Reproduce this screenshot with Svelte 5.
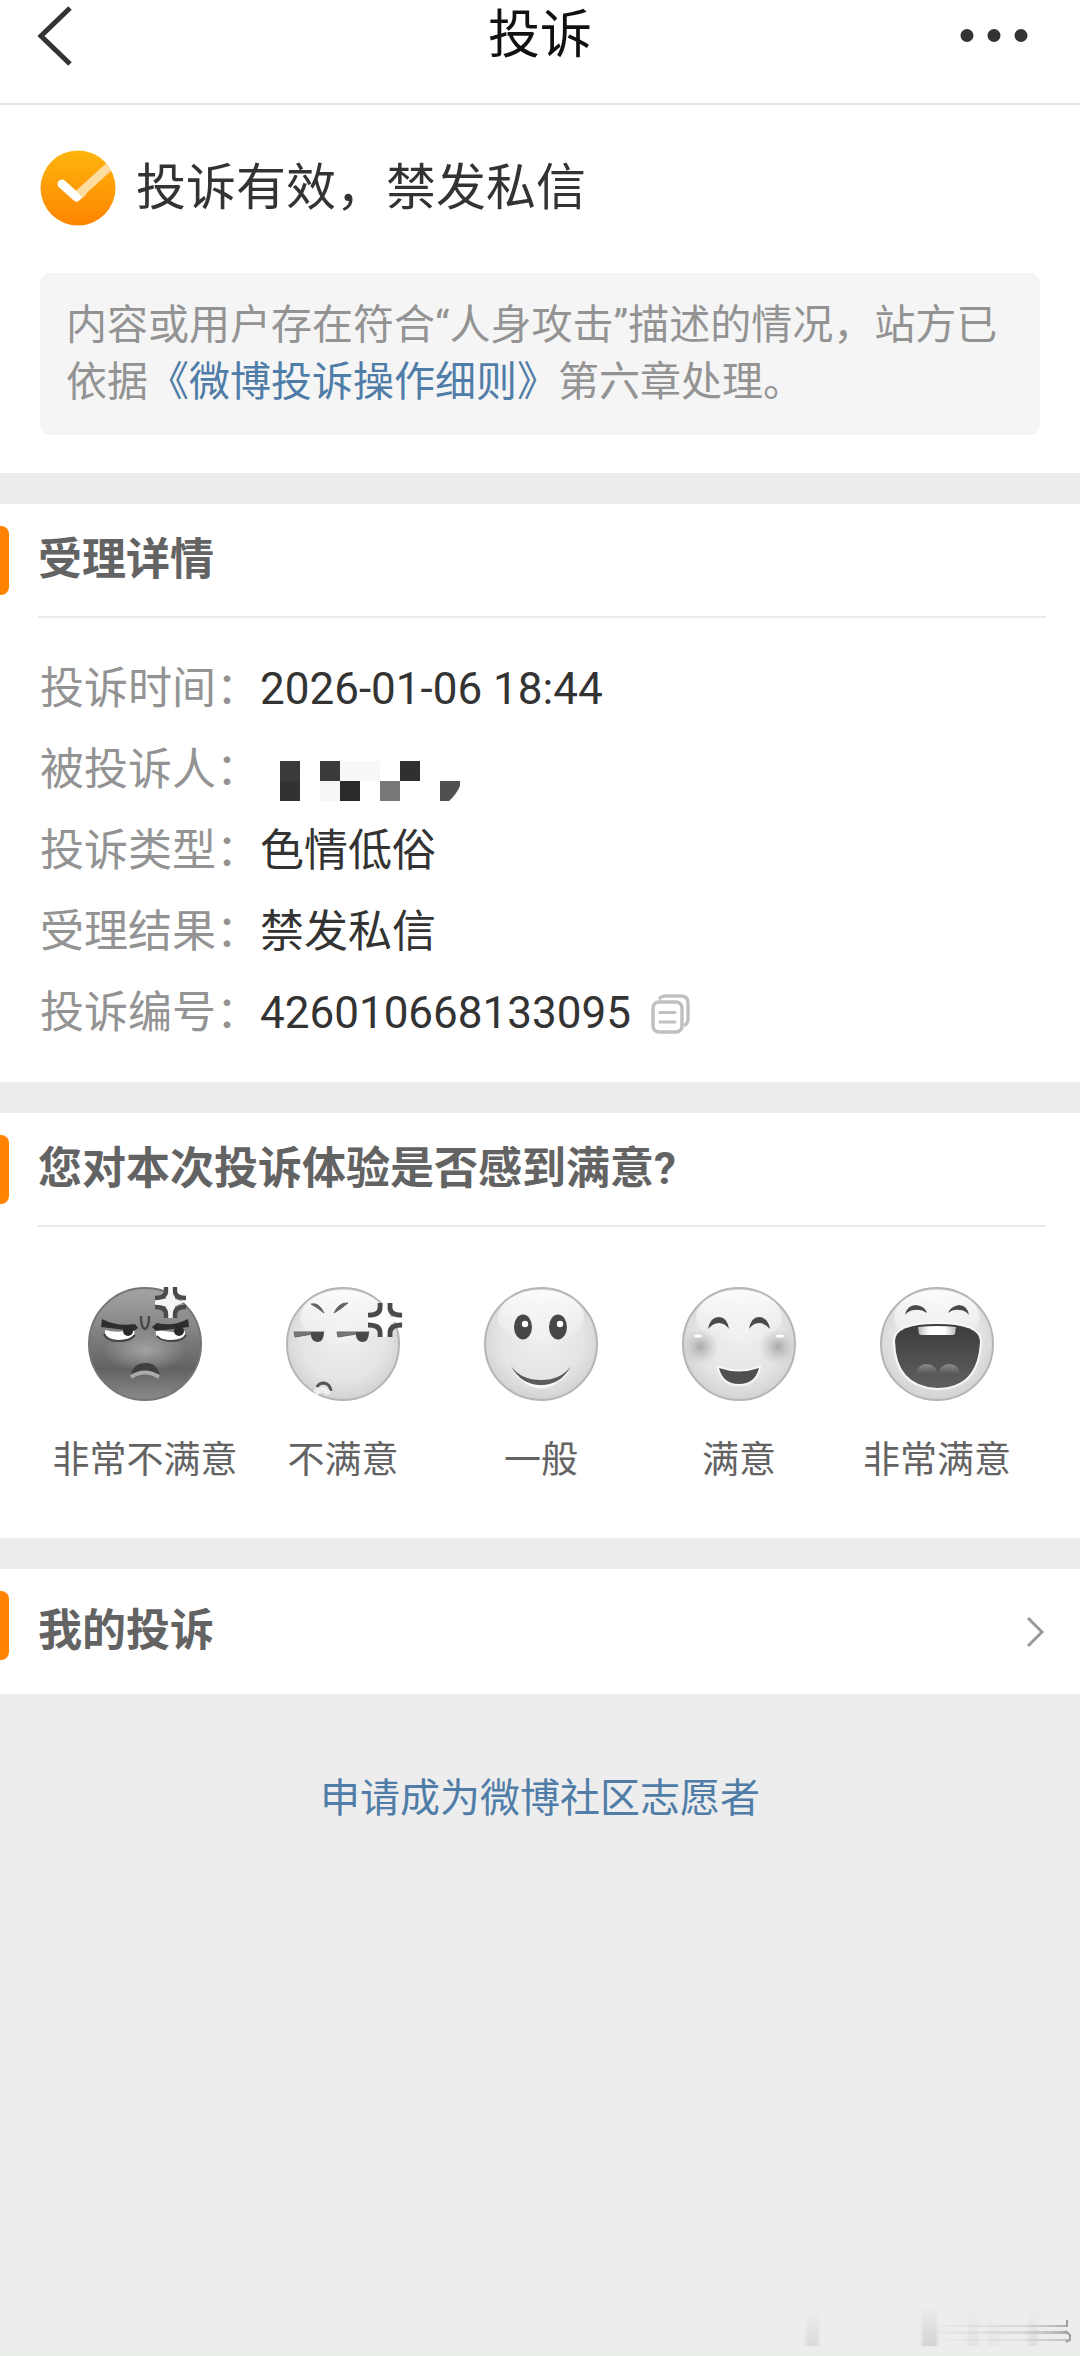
<script>
  const details = [
    { label: "投诉时间：", value: "2026-01-06 18:44" },
    { label: "被投诉人：", masked: true },
    { label: "投诉类型：", value: "色情低俗" },
    { label: "受理结果：", value: "禁发私信" },
    { label: "投诉编号：", value: "426010668133095", copy: true }
  ];

  const ratings = [
    { face: "furious", text: "非常不满意" },
    { face: "annoyed", text: "不满意" },
    { face: "neutral", text: "一般" },
    { face: "happy", text: "满意" },
    { face: "laughing", text: "非常满意" }
  ];

  let selected = $state("");

  function copyNumber(value) {
    navigator.clipboard?.writeText(value);
  }
</script>

<svelte:head>
  <title>投诉</title>
</svelte:head>

{#snippet anger(x, y, s)}
  <g transform="translate({x} {y}) scale({s})">
    <path d="M0 12H11V0H20V12L30 15L20 19V31H11V19H0Z" fill="#fff" opacity="0.9" />
    <g fill="none" stroke="#4a4a4a" stroke-width="4.4">
      <path d="M11 0V4Q11 11 0 11" />
      <path d="M20 0V4Q20 11 31 11" />
      <path d="M11 31V27Q11 20 0 20" />
      <path d="M20 31V27Q20 20 31 20" />
    </g>
  </g>
{/snippet}

<div class="page">
  <header class="navbar">
    <button class="icon-btn" aria-label="返回">
      <svg width="36" height="60" viewBox="0 0 36 60">
        <path d="M34 2L5 30L34 58" fill="none" stroke="#333" stroke-width="5" />
      </svg>
    </button>
    <h1>投诉</h1>
    <button class="icon-btn more" aria-label="更多">
      <svg width="68" height="14" viewBox="0 0 68 14">
        <circle cx="7" cy="6.5" r="6.5" fill="#333" />
        <circle cx="34" cy="6.5" r="6.5" fill="#333" />
        <circle cx="61" cy="6.5" r="6.5" fill="#333" />
      </svg>
    </button>
  </header>

  <section class="status">
    <div class="result">
      <svg width="76" height="76" viewBox="0 0 76 76" aria-hidden="true">
        <defs>
          <linearGradient id="badge" x1="0" y1="0" x2="0" y2="1">
            <stop offset="0" stop-color="#fdb50d" />
            <stop offset="1" stop-color="#fe8400" />
          </linearGradient>
          <clipPath id="badgeClip"><circle cx="38" cy="38" r="37.5" /></clipPath>
        </defs>
        <circle cx="38" cy="38" r="37.5" fill="url(#badge)" />
        <g clip-path="url(#badgeClip)" fill="none" stroke-width="9">
          <path d="M22 34L36.500 47L42 42" stroke="#fff" stroke-linejoin="round" stroke-linecap="round" />
          <path d="M39 44L72 14" stroke="#fedca0" />
        </g>
      </svg>
      <h2>投诉有效，禁发私信</h2>
    </div>
    <p class="notice">内容或用户存在符合“人身攻击”描述的情况，站方已依据<a href="#rules">《微博投诉操作细则》</a>第六章处理。</p>
  </section>

  <section class="card">
    <h3 class="head">受理详情</h3>
    <dl class="details">
      {#each details as item}
        <div class="row">
          <dt>{item.label}</dt>
          <dd>
            {#if item.masked}
              <svg width="200" height="60" viewBox="0 0 200 60" aria-hidden="true">
                <rect x="20" y="20" width="20" height="20" fill="#3a3a3a" />
                <rect x="20" y="40" width="20" height="20" fill="#323232" />
                <rect x="60" y="20" width="20" height="20" fill="#3a3a3a" />
                <rect x="80" y="20" width="40" height="20" fill="#f8f8f8" />
                <rect x="60" y="40" width="20" height="20" fill="#f6f6f6" />
                <rect x="80" y="40" width="20" height="20" fill="#2a2a2a" />
                <rect x="120" y="40" width="20" height="20" fill="#787878" />
                <rect x="140" y="20" width="20" height="20" fill="#303030" />
                <path d="M180 40H200V45Q196 54 189 60H180Z" fill="#505050" />
              </svg>
            {:else}
              {item.value}
            {/if}
            {#if item.copy}
              <button class="icon-btn" aria-label="复制" onclick={() => copyNumber(item.value)}>
                <svg width="40" height="40" viewBox="0 0 40 40">
                  <g fill="none" stroke="#c0c0c0" stroke-width="3.4" stroke-linecap="round">
                    <rect x="2" y="8" width="29" height="30" rx="6" />
                    <path d="M9 4Q11 2 14 2H30Q37 2 37 9V25Q37 29 34 31" />
                    <path d="M9 18.500H24M9 28H24" stroke-width="3" />
                  </g>
                </svg>
              </button>
            {/if}
          </dd>
        </div>
      {/each}
    </dl>
  </section>

  <section class="card">
    <h3 class="head">您对本次投诉体验是否感到满意?</h3>
    <svg class="defs" width="0" height="0" aria-hidden="true">
      <defs>
        <radialGradient id="light" cx="0.5" cy="0.45" r="0.55">
          <stop offset="0" stop-color="#f0f0f0" />
          <stop offset="0.7" stop-color="#e4e4e4" />
          <stop offset="1" stop-color="#d2d2d2" />
        </radialGradient>
        <linearGradient id="shine" x1="0" y1="0" x2="0" y2="1">
          <stop offset="0" stop-color="#fff" stop-opacity="0.9" />
          <stop offset="1" stop-color="#fff" stop-opacity="0" />
        </linearGradient>
        <linearGradient id="dark" x1="0" y1="0" x2="0" y2="1">
          <stop offset="0" stop-color="#a4a4a4" />
          <stop offset="0.35" stop-color="#868686" />
          <stop offset="0.72" stop-color="#626262" />
          <stop offset="1" stop-color="#8a8a8a" />
        </linearGradient>
        <radialGradient id="glow">
          <stop offset="0" stop-color="#a2a2a2" />
          <stop offset="1" stop-color="#a2a2a2" stop-opacity="0" />
        </radialGradient>
        <radialGradient id="blush">
          <stop offset="0" stop-color="#a8a8a8" />
          <stop offset="1" stop-color="#c8c8c8" stop-opacity="0" />
        </radialGradient>
        <linearGradient id="mouth" x1="0" y1="0" x2="0" y2="1">
          <stop offset="0" stop-color="#3c3c3c" />
          <stop offset="1" stop-color="#606060" />
        </linearGradient>
        <linearGradient id="tongue" x1="0" y1="0" x2="0" y2="1">
          <stop offset="0" stop-color="#8c8c8c" />
          <stop offset="1" stop-color="#8c8c8c" stop-opacity="0" />
        </linearGradient>
        <linearGradient id="teeth">
          <stop offset="0" stop-color="#b8b8b8" />
          <stop offset="0.3" stop-color="#fff" />
          <stop offset="0.7" stop-color="#fff" />
          <stop offset="1" stop-color="#b8b8b8" />
        </linearGradient>
      </defs>
    </svg>
    <div class="ratings">
      {#each ratings as item}
        <button class="rate" aria-pressed={selected === item.face} onclick={() => (selected = item.face)}>
          <svg class="face" width="120" height="116" viewBox="-60 -58 120 116" aria-hidden="true">
            {#if item.face === "furious"}
              <circle r="56" fill="url(#dark)" stroke="#757575" stroke-width="2" />
              <ellipse cy="6" rx="42" ry="22" fill="url(#glow)" />
              <path d="M-40 -14Q-26 -10 -11 -15Q-8 -5 -20 -4L-32 -4Q-41 -5 -40 -14Z" fill="#fff" />
              <path d="M40 -13Q26 -10 11 -15Q9 -5 20 -4L32 -4Q41 -5 40 -13Z" fill="#fff" />
              <path d="M-41 -10Q-38 -3 -26 -3Q-15 -3 -10 -9" fill="none" stroke="#444" stroke-width="2" />
              <path d="M12 -8Q16 -3 26 -3Q38 -3 41 -9" fill="none" stroke="#444" stroke-width="2" />
              <path d="M-43 -25Q-28 -17 -10 -20L-7 -16L-11 -13Q-28 -15 -44 -17Z" fill="#2e2e2e" />
              <path d="M43 -25Q28 -17 12 -21L7 -17L11 -13Q28 -15 44 -17Z" fill="#2e2e2e" />
              <circle cx="-17" cy="-13" r="5" fill="#2a2a2a" />
              <circle cx="34" cy="-13" r="5" fill="#2a2a2a" />
              <path d="M-4 -28Q-4 -16 0 -15Q4 -16 4 -28" fill="none" stroke="#484848" stroke-width="2.4" />
              <path d="M-14 31Q-12 19 1 19Q12 19 15 31Q1 25 -14 31Z" fill="#404040" />
              <path d="M-14 33Q0 24 14 33" fill="none" stroke="#aaa" stroke-width="4" />
              {@render anger(10, -57, 1)}
            {:else if item.face === "annoyed"}
              <circle r="56" fill="url(#light)" stroke="#b5b5b5" stroke-width="2" />
              <ellipse cy="-27" rx="43" ry="27" fill="url(#shine)" />
              <path d="M-32 -40Q-24 -42 -19 -31Q-25 -36 -32 -40Z" fill="#666" stroke="#666" />
              <path d="M5 -41Q-4 -42 -9 -31Q-2 -35 5 -41Z" fill="#666" stroke="#666" />
              <path d="M-49 -12H-19L-48 -7Z" fill="#777" stroke="#666" />
              <path d="M-6 -12H26L-5 -7Z" fill="#777" stroke="#666" />
              <path d="M-32 -12H-19Q-19 -2 -26 -2Q-33 -3 -32 -12Z" fill="#484848" />
              <path d="M13 -12H26Q26 -2 19 -2Q12 -3 13 -12Z" fill="#484848" />
              <path d="M-26 43Q-24 39 -19 39Q-13 40 -12 47" fill="none" stroke="#555" stroke-width="3" />
              <path d="M-28 49Q-20 42 -14 50" fill="none" stroke="#eee" stroke-width="6" />
              {@render anger(25, -41, 1.1)}
            {:else if item.face === "neutral"}
              <circle r="56" fill="url(#light)" stroke="#b5b5b5" stroke-width="2" />
              <ellipse cy="-27" rx="43" ry="27" fill="url(#shine)" />
              <ellipse cx="-18" cy="-17" rx="9" ry="12.5" fill="#474747" />
              <ellipse cx="17" cy="-17" rx="9" ry="12.5" fill="#474747" />
              <circle cx="-16" cy="-20" r="3.2" fill="#fff" />
              <circle cx="19" cy="-20" r="3.2" fill="#fff" />
              <path d="M-26 28Q-1 58 27 28" fill="none" stroke="#f8f8f8" stroke-width="3" />
              <path d="M-30 22Q-20 36 0 36Q20 36 30 22Q20 41 0 41Q-20 41 -30 22Z" fill="#5a5a5a" />
            {:else if item.face === "happy"}
              <circle r="56" fill="url(#light)" stroke="#b5b5b5" stroke-width="2" />
              <ellipse cy="-27" rx="43" ry="27" fill="url(#shine)" />
              <circle cx="-39" cy="3" r="19" fill="url(#blush)" />
              <circle cx="39" cy="3" r="19" fill="url(#blush)" />
              <ellipse cx="-41" cy="-8" rx="4" ry="1.5" fill="#fff" />
              <ellipse cx="41" cy="-8" rx="4" ry="1.5" fill="#fff" />
              <path d="M-31 -15Q-29 -27 -20 -27Q-12 -27 -10 -15Q-14 -21 -20 -21Q-26 -21 -31 -15Z" fill="#4a4a4a" />
              <path d="M10 -15Q12 -27 20 -27Q29 -27 31 -15Q26 -21 20 -21Q14 -21 10 -15Z" fill="#4a4a4a" />
              <path d="M-20 24Q0 31 20 24Q16 40 0 40Q-16 40 -20 24Z" fill="#505050" stroke="#f6f6f6" stroke-width="4" paint-order="stroke" />
            {:else}
              <circle r="56" fill="url(#light)" stroke="#b5b5b5" stroke-width="2" />
              <ellipse cy="-27" rx="43" ry="27" fill="url(#shine)" />
              <path d="M-32 -29Q-30 -39 -21 -39Q-12 -38 -10 -31Q-16 -35 -22 -34Q-28 -34 -32 -29Z" fill="#4a4a4a" />
              <path d="M11 -31Q14 -38 22 -39Q30 -39 32 -29Q28 -34 22 -34Q16 -35 11 -31Z" fill="#4a4a4a" />
              <path d="M-42 -3Q-42 -20 0 -20Q42 -20 43 -3Q41 44 0 44Q-41 42 -42 -3Z" fill="url(#mouth)" stroke="#f8f8f8" stroke-width="4" paint-order="stroke" />
              <path d="M-19 -17Q0 -19 19 -17L18 -10Q17 -9 15 -9H-15Q-17 -9 -18 -10Z" fill="url(#teeth)" />
              <path d="M-21 29Q-19 20 -10 20Q-2 20 1 30Z" fill="url(#tongue)" />
              <path d="M1 30Q4 20 12 20Q21 20 23 29Z" fill="url(#tongue)" />
            {/if}
          </svg>
          <span>{item.text}</span>
        </button>
      {/each}
    </div>
  </section>

  <section class="card">
    <a class="head link-head" href="#mine">
      <span>我的投诉</span>
      <svg width="20" height="32" viewBox="0 0 20 32" aria-hidden="true">
        <path d="M2 2L16 16L2 30" fill="none" stroke="#999" stroke-width="3" />
      </svg>
    </a>
  </section>

  <footer>
    <a href="#volunteer">申请成为微博社区志愿者</a>
    <!-- faded watermark -->
    <svg class="mark" width="280" height="50" viewBox="0 0 280 50" aria-hidden="true">
      <defs>
        <linearGradient id="fade" x1="0" y1="0" x2="0" y2="1">
          <stop offset="0" stop-color="#c8c8c8" stop-opacity="0" />
          <stop offset="1" stop-color="#c8c8c8" />
        </linearGradient>
        <linearGradient id="streak">
          <stop offset="0" stop-color="#c4c4c4" stop-opacity="0" />
          <stop offset="0.7" stop-color="#c4c4c4" stop-opacity="0.5" />
          <stop offset="1" stop-color="#aaa" />
        </linearGradient>
        <filter id="soft" x="-20%" y="-20%" width="140%" height="140%">
          <feGaussianBlur stdDeviation="1.5 0.5" />
        </filter>
      </defs>
      <g fill="url(#fade)" filter="url(#soft)">
        <rect x="6" y="10" width="13" height="34" opacity="0.5" />
        <rect x="122" y="4" width="15" height="40" opacity="0.7" />
        <rect x="168" y="8" width="10" height="36" opacity="0.3" />
        <rect x="188" y="12" width="12" height="32" opacity="0.2" />
        <rect x="228" y="8" width="10" height="36" opacity="0.4" />
      </g>
      <g fill="url(#streak)">
        <rect x="120" y="23" width="148" height="2" />
        <rect x="120" y="29" width="148" height="3" />
        <rect x="120" y="37" width="148" height="2" opacity="0.7" />
      </g>
      <path d="M267 18V25M265 29L270 33V38L266 40" fill="none" stroke="#a0a0a0" stroke-width="2" />
    </svg>
  </footer>
</div>

<style>
  :global(body) {
    margin: 0;
    background: #ededed;
  }
  .page {
    display: flex;
    flex-direction: column;
    min-height: 100vh;
    font-family: Roboto, "Noto Sans CJK SC", sans-serif;
    color: #333;
  }
  h1, h2, h3, p, dl, dd {
    margin: 0;
    font-weight: 400;
  }
  a {
    color: #507da8;
    text-decoration: none;
  }
  button {
    padding: 0;
    border: 0;
    background: none;
    font: inherit;
    color: inherit;
    cursor: pointer;
  }
  svg {
    display: block;
    flex: none;
  }
  .icon-btn {
    display: flex;
  }
  .navbar {
    display: grid;
    grid-template-columns: 1fr auto 1fr;
    align-items: center;
    padding: 0 52px 31px 36px;
    border-bottom: 2px solid #e6e6e6;
    background: #fff;
  }
  .navbar h1 {
    padding-left: 16px;
    font-size: 52px;
    line-height: 72px;
    color: #111;
  }
  .more {
    justify-self: end;
  }
  .status {
    padding: 45px 40px 38px;
    background: #fff;
  }
  .result {
    display: flex;
    align-items: center;
    gap: 20px;
  }
  .result h2 {
    font-size: 50px;
    line-height: 76px;
  }
  .notice {
    margin-top: 47px;
    padding: 24px 26px;
    border-radius: 10px;
    background: #f5f5f5;
    font-size: 41px;
    line-height: 57px;
    color: #939393;
  }
  .card {
    margin-top: 31px;
    background: #fff;
  }
  .head {
    position: relative;
    display: block;
    margin: 0 34px 0 38px;
    border-bottom: 2px solid #ebebeb;
    font-size: 44px;
    font-weight: 700;
    line-height: 112px;
    color: #636363;
  }
  .head::before {
    content: "";
    position: absolute;
    left: -38px;
    top: 22px;
    width: 9px;
    height: 69px;
    border-radius: 0 8px 8px 0;
    background: #ff8200;
  }
  .link-head {
    display: flex;
    align-items: center;
    justify-content: space-between;
    border-bottom: 0;
    line-height: 125px;
  }
  .details {
    padding: 31px 40px 28px;
    font-size: 44px;
    line-height: 81px;
  }
  .row {
    display: flex;
    height: 81px;
  }
  .row dt {
    color: #939393;
  }
  .row dd {
    display: flex;
    align-items: center;
    gap: 20px;
  }
  .defs {
    position: absolute;
  }
  .ratings {
    display: grid;
    grid-template-columns: repeat(5, 1fr);
    padding: 59px 44px 47px 46px;
  }
  .rate {
    display: flex;
    flex-direction: column;
    align-items: center;
    gap: 29px;
    font-size: 37px;
    line-height: 60px;
    color: #636363;
    white-space: nowrap;
  }
  .face {
    overflow: visible;
  }
  footer {
    flex: 1;
    display: flex;
    flex-direction: column;
    align-items: center;
    padding-top: 75px;
    border-bottom: 4px solid #e9eee8;
    font-size: 40px;
    line-height: 60px;
  }
  .mark {
    align-self: flex-end;
    margin-top: auto;
  }
</style>
